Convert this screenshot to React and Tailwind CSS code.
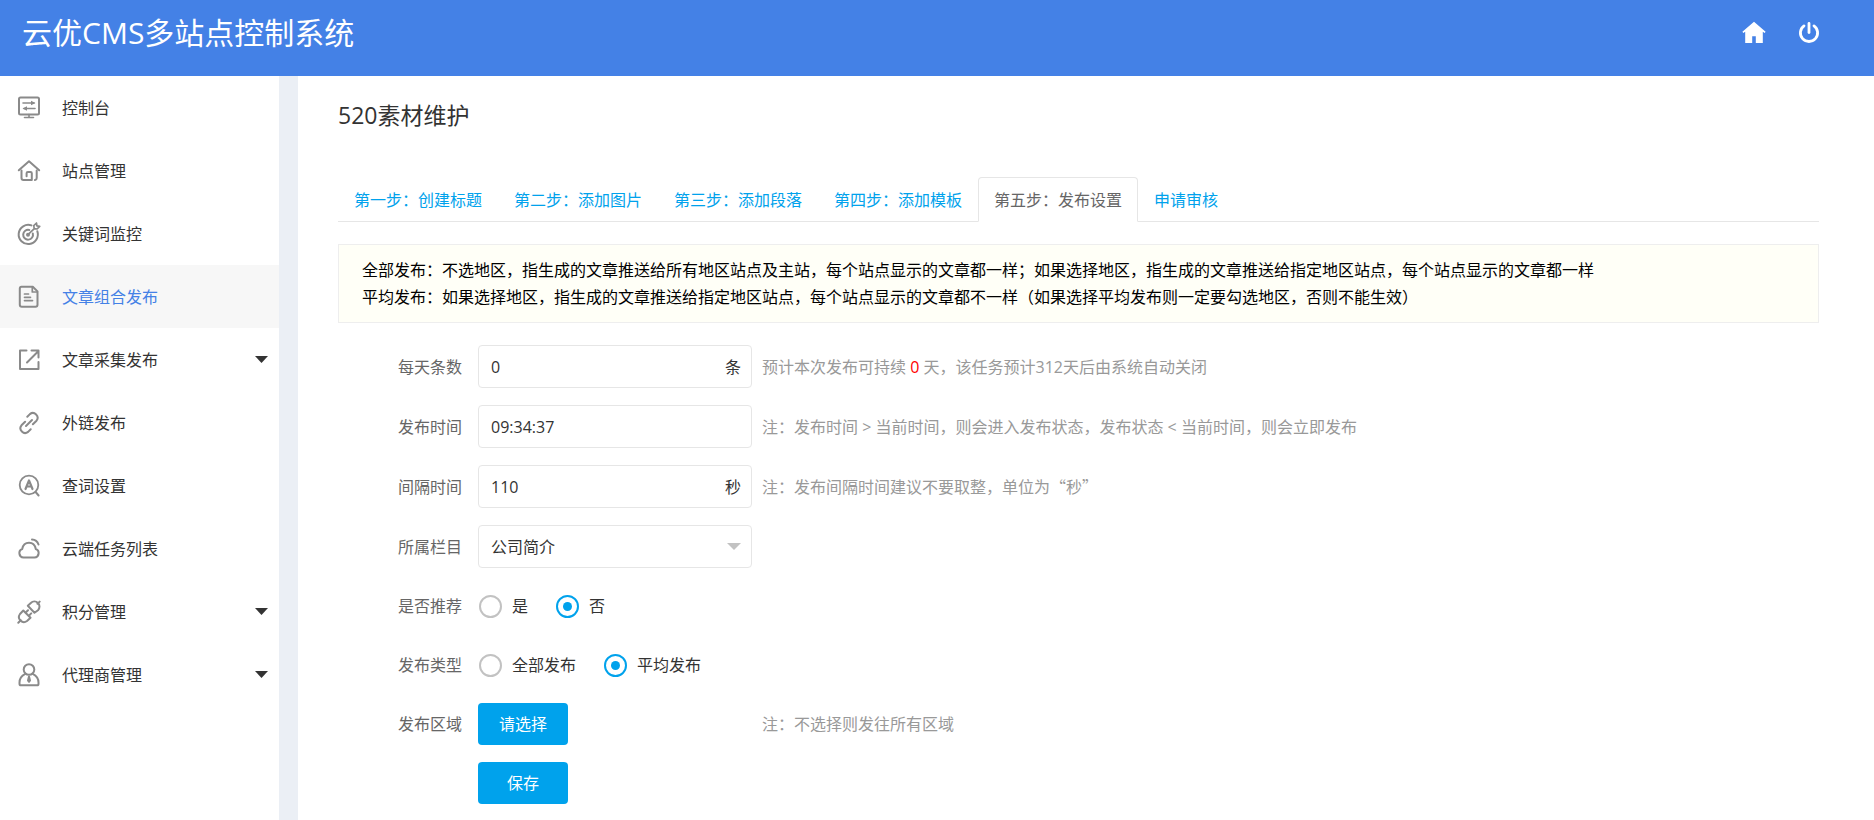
import { useState } from "react";
import clsx from "clsx";

const menu = [
  { label: "控制台", icon: ConsoleIcon },
  { label: "站点管理", icon: SiteIcon },
  { label: "关键词监控", icon: TargetIcon },
  { label: "文章组合发布", icon: DocIcon },
  { label: "文章采集发布", icon: ExportIcon, children: true },
  { label: "外链发布", icon: LinkIcon },
  { label: "查词设置", icon: SearchWordIcon },
  { label: "云端任务列表", icon: CloudIcon },
  { label: "积分管理", icon: PlugIcon, children: true },
  { label: "代理商管理", icon: AgentIcon, children: true },
];

const tabs = [
  "第一步：创建标题",
  "第二步：添加图片",
  "第三步：添加段落",
  "第四步：添加模板",
  "第五步：发布设置",
  "申请审核",
];

export default function App() {
  return (
    <div className="flex min-h-screen flex-col bg-white font-['Open_Sans','Noto_Sans_CJK_SC',sans-serif] text-base text-[#333]">
      <Header />
      <div className="flex flex-1">
        <Sidebar />
        <main className="min-w-0 flex-1 pt-6 pr-[55px] pb-4 pl-10">
          <h1 className="text-[23px] leading-[30px]">520素材维护</h1>
          <Tabs />
          <div className="mt-[22px] border border-[#eee] bg-[#fffff7] px-[23px] pt-3 pb-[11px] leading-[27px] text-black">
            <p>
              全部发布：不选地区，指生成的文章推送给所有地区站点及主站，每个站点显示的文章都一样；如果选择地区，指生成的文章推送给指定地区站点，每个站点显示的文章都一样
            </p>
            <p>
              平均发布：如果选择地区，指生成的文章推送给指定地区站点，每个站点显示的文章都不一样（如果选择平均发布则一定要勾选地区，否则不能生效）
            </p>
          </div>
          <PublishForm />
        </main>
      </div>
    </div>
  );
}

function Header() {
  return (
    <header className="flex h-[76px] items-center justify-between bg-[#4481e6] pr-[54px] pb-2.5 pl-[22px] text-white">
      <div className="text-[30px] leading-10">云优CMS多站点控制系统</div>
      <div className="flex items-center gap-8">
        <a href="#" aria-label="首页">
          <svg viewBox="0 0 24 24" className="size-6" fill="currentColor">
            <path d="M12 .8.4 10.700l.9 1.200 1.900-1.200V22h7v-6.700h3.600V22h7V10.700l1.900 1.200.9-1.200z" />
          </svg>
        </a>
        <a href="#" aria-label="退出">
          <svg
            viewBox="0 0 22 22"
            className="size-[22px]"
            fill="none"
            stroke="currentColor"
            strokeWidth="2.8"
            strokeLinecap="round"
          >
            <path d="M11 1.500v9" />
            <path d="M6 3.900a8.600 8.600 0 1 0 10 0" />
          </svg>
        </a>
      </div>
    </header>
  );
}

function Sidebar() {
  const [active, setActive] = useState("文章组合发布");
  return (
    <nav className="w-[298px] shrink-0 border-r-[19px] border-[#ebeff5]">
      <ul>
        {menu.map(({ label, icon: Icon, children }) => (
          <li key={label}>
            <a
              href="#"
              onClick={() => setActive(label)}
              className={clsx(
                "flex h-[63px] items-center pr-[11px] pl-[17px]",
                active === label && "bg-[#f7f7f7] text-[#4481e6]"
              )}
            >
              <Icon />
              <span className="ml-[21px] flex-1">{label}</span>
              {children && (
                <svg viewBox="0 0 13 7" className="h-[7px] w-[13px]">
                  <path d="M0 0h13L6.500 7z" fill="#333" />
                </svg>
              )}
            </a>
          </li>
        ))}
      </ul>
    </nav>
  );
}

function Tabs() {
  const [current, setCurrent] = useState("第五步：发布设置");
  return (
    <div className="mt-[47px] flex h-[45px] border-b border-[#e6e6e6]">
      {tabs.map((tab) => (
        <button
          key={tab}
          type="button"
          onClick={() => setCurrent(tab)}
          className={clsx(
            "-mb-px h-[45px] cursor-pointer border px-[15px]",
            current === tab
              ? "rounded-t-sm border-[#e6e6e6] border-b-white bg-white text-[#666]"
              : "border-transparent text-[#00a2ec]"
          )}
        >
          {tab}
        </button>
      ))}
    </div>
  );
}

function PublishForm() {
  return (
    <form
      className="mt-[22px] flex flex-col gap-[17px]"
      onSubmit={(e) => e.preventDefault()}
    >
      <Row label="每天条数" htmlFor="count">
        <Field id="count" value="0" unit="条" />
        <Note>
          预计本次发布可持续 <span className="text-[#f00]">0</span>{" "}
          天，该任务预计312天后由系统自动关闭
        </Note>
      </Row>
      <Row label="发布时间" htmlFor="time">
        <Field id="time" value="09:34:37" />
        <Note>
          注：发布时间 &gt; 当前时间，则会进入发布状态，发布状态 &lt;
          当前时间，则会立即发布
        </Note>
      </Row>
      <Row label="间隔时间" htmlFor="interval">
        <Field id="interval" value="110" unit="秒" />
        <Note>
          注：发布间隔时间建议不要取整，单位为
          <span className="font-['Noto_Sans_CJK_SC',sans-serif]">“秒”</span>
        </Note>
      </Row>
      <Row label="所属栏目" htmlFor="column">
        <div className="relative w-[274px]">
          <select
            id="column"
            className="block h-[43px] w-full appearance-none rounded-sm border border-[#e6e6e6] bg-white px-3 outline-none"
          >
            <option>公司简介</option>
          </select>
          <svg
            viewBox="0 0 14 7"
            className="pointer-events-none absolute top-[18px] right-[11px] h-[7px] w-[14px]"
          >
            <path d="M0 0h14L7 7z" fill="#c2c2c2" />
          </svg>
        </div>
      </Row>
      <RadioRow
        label="是否推荐"
        name="recommend"
        options={["是", "否"]}
        checked="否"
      />
      <RadioRow
        label="发布类型"
        name="type"
        options={["全部发布", "平均发布"]}
        checked="平均发布"
      />
      <Row label="发布区域" htmlFor="area">
        <div className="w-[274px]">
          <button
            id="area"
            type="button"
            className="block h-[42px] w-[90px] cursor-pointer rounded-sm bg-[#00a2ec] text-white"
          >
            请选择
          </button>
        </div>
        <Note>注：不选择则发往所有区域</Note>
      </Row>
      <div className="pl-[140px]">
        <button
          type="submit"
          className="block h-[42px] w-[90px] cursor-pointer rounded-sm bg-[#00a2ec] text-white"
        >
          保存
        </button>
      </div>
    </form>
  );
}

function Row({ label, htmlFor, children }) {
  return (
    <div className="flex items-center">
      <label
        htmlFor={htmlFor}
        className="w-[140px] shrink-0 pr-4 text-right text-[#666]"
      >
        {label}
      </label>
      {children}
    </div>
  );
}

function RadioRow({ label, name, options, checked }) {
  return (
    <div
      role="radiogroup"
      aria-labelledby={name}
      className="flex h-[42px] items-center"
    >
      <span id={name} className="w-[140px] pr-4 text-right text-[#666]">
        {label}
      </span>
      <div className="flex gap-7 pl-px">
        {options.map((option) => (
          <label key={option} className="flex items-center gap-2.5">
            <input
              type="radio"
              name={name}
              defaultChecked={option === checked}
              className="grid size-[23px] appearance-none place-content-center rounded-full border-2 border-[#c2c2c2] checked:border-[#00a2ec] checked:before:size-[9px] checked:before:rounded-full checked:before:bg-[#00a2ec]"
            />
            {option}
          </label>
        ))}
      </div>
    </div>
  );
}

function Field({ id, value, unit }) {
  return (
    <div className="flex h-[43px] w-[274px] items-center rounded-sm border border-[#e6e6e6] pr-2.5 pl-3">
      <input
        id={id}
        defaultValue={value}
        className="h-full min-w-0 flex-1 outline-none"
      />
      {unit && <span>{unit}</span>}
    </div>
  );
}

function Note({ children }) {
  return <p className="ml-2.5 text-[#999]">{children}</p>;
}

function Icon({ children }) {
  return (
    <svg
      viewBox="0 0 24 24"
      className="size-6 shrink-0"
      fill="none"
      stroke="#8a8a8a"
      strokeWidth="2"
      strokeLinecap="round"
      strokeLinejoin="round"
    >
      {children}
    </svg>
  );
}

function ConsoleIcon() {
  return (
    <Icon>
      <rect x="2" y="1.500" width="20" height="17" rx="1.500" />
      <path d="M6 7h11M7 12.500h11M12 18.500V21M7.500 21.500h9" strokeWidth="1.600" />
      <path d="m14 4.700 4.500 2.300L14 9.300zM10 10.200l-4.500 2.300 4.500 2.300z" fill="#8a8a8a" stroke="none" />
    </Icon>
  );
}

function SiteIcon() {
  return (
    <Icon>
      <path d="M1.800 11.300 12 2.300l10.200 9" />
      <path d="M4.500 11.500V19a2 2 0 0 0 2 2h8.300v-6.800a1.300 1.300 0 0 0-1.300-1.300h-2.600a1.300 1.300 0 0 0-1.300 1.300v3" />
      <path d="M19.700 11.500V19a2 2 0 0 1-1.700 2" />
    </Icon>
  );
}

function TargetIcon() {
  return (
    <Icon>
      <path d="M14.500 3.400A9.600 9.600 0 1 0 20.300 9.200" />
      <path d="M12.300 8a4.900 4.900 0 1 0 3.500 3.400" />
      <path d="m11 12.700 6.300-6M17.200 6.700l-.4-3L19.500 1l.4 2.900 2.800.4-2.600 2.700z" strokeWidth="1.700" />
      <circle cx="11" cy="12.700" r="1" fill="#8a8a8a" />
    </Icon>
  );
}

function DocIcon() {
  return (
    <Icon>
      <path d="M4.500 1.700h11.300L20.500 6.400v13.300a2 2 0 0 1-2 2H4.800a2 2 0 0 1-2-2V3.500a1.800 1.800 0 0 1 1.700-1.800z" />
      <path d="M15.300 2v5h5" strokeWidth="1.700" />
      <path d="M7.500 9h4M7.500 12.300h6M7.500 15.600h8" strokeWidth="1.700" />
    </Icon>
  );
}

function ExportIcon() {
  return (
    <Icon>
      <path d="M9.500 2.500H3v18.500h18.500v-7" />
      <path d="M10 14.500 21 3.500M14.500 2.500h7v7" />
    </Icon>
  );
}

function LinkIcon() {
  return (
    <Icon>
      <path d="m10.300 5.700 2.600-2.600a4.700 4.700 0 0 1 6.600 6.600l-3.600 3.600" />
      <path d="m13.700 18.300-2.600 2.600a4.700 4.700 0 0 1-6.600-6.600l3.600-3.600" />
      <path d="m9 15 6-6" />
    </Icon>
  );
}

function SearchWordIcon() {
  return (
    <Icon>
      <circle cx="12" cy="11" r="9.300" strokeWidth="1.800" />
      <path d="m18.600 18 3 3.500" />
      <path d="m8.500 15 3.500-8.500 3.500 8.500M10 12.500h4" strokeWidth="2.200" />
    </Icon>
  );
}

function CloudIcon() {
  return (
    <Icon>
      <path d="M6.500 20.500a4.400 4.400 0 0 1-1.300-8.500C6 8 8.500 5.800 12 5.800s6 2.200 6.800 6.200a4.400 4.400 0 0 1-1.300 8.500z" />
      <path d="M15 2.500c3.200.2 5.500 2 6.500 5" />
    </Icon>
  );
}

function PlugIcon() {
  return (
    <Icon>
      <path d="M10.800 5.800 13.800 3a5 5 0 0 1 7.200 7.200l-3.500 2.500z" />
      <path d="m20.500 3.800 2.200-2.200" />
      <path d="m6.300 10.500 7.200 7.200L10 21a5 5 0 0 1-7-7z" />
      <path d="m3.700 20.300-2.400 2.400M8.700 12.500l2.300-2.300M11.900 15.700l2.300-2.300" />
    </Icon>
  );
}

function AgentIcon() {
  return (
    <Icon>
      <circle cx="12" cy="6.500" r="5.300" />
      <path d="M8.300 10.800C4.800 12.500 2.500 16 2.500 19.500v1.200c0 1 .5 1.600 1.500 1.600h16c1 0 1.500-.6 1.500-1.600v-1.200c0-3.500-2.300-7-5.800-8.700" />
      <path d="m12 13.500 1 4-1 1.300-1-1.300z" fill="#8a8a8a" />
    </Icon>
  );
}
